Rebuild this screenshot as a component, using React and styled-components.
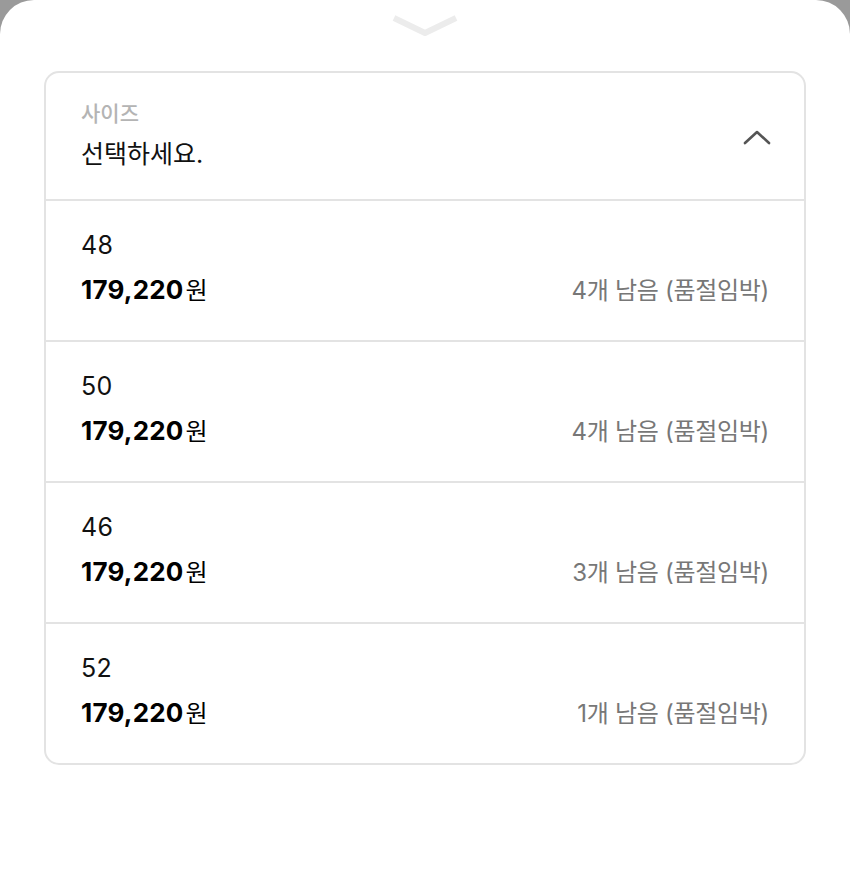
import React from 'react';
import styled, { createGlobalStyle } from 'styled-components';

const GlobalStyle = createGlobalStyle`
  html, body {
    margin: 0;
    padding: 0;
    background: #9a9a9a;
  }
  body {
    font-family: Inter, "Noto Sans CJK KR", sans-serif;
    color: #111;
  }
`;

const Sheet = styled.div`
  background: #fff;
  border-radius: 34px 34px 0 0;
  min-height: 871px;
  box-sizing: border-box;
  padding: 0 44px;
  display: flex;
  flex-direction: column;
`;

const Handle = styled.div`
  height: 71px;
  display: flex;
  justify-content: center;
  padding-top: 13px;
  box-sizing: border-box;
`;

const Card = styled.div`
  border: 2px solid #e3e3e3;
  border-radius: 15px;
  overflow: hidden;
`;

const Header = styled.div`
  height: 126px;
  box-sizing: border-box;
  padding: 26px 35px 0 35px;
  display: flex;
  justify-content: space-between;
  align-items: flex-start;
`;

const Label = styled.div`
  font-size: 21px;
  color: #b4b4b4;
  line-height: 30px;
  font-weight: 500;
`;

const Placeholder = styled.div`
  font-size: 25px;
  color: #111;
  line-height: 34px;
  margin-top: 8px;
`;

const Toggle = styled.div`
  margin-top: 30px;
  margin-right: -2px;
`;

const Option = styled.div`
  height: 141px;
  box-sizing: border-box;
  border-top: 2px solid #e3e3e3;
  padding: 26px 35px 0 35px;
`;

const Size = styled.div`
  font-size: 25px;
  line-height: 36px;
  color: #111;
  letter-spacing: 0.3px;
`;

const PriceRow = styled.div`
  display: flex;
  justify-content: space-between;
  align-items: baseline;
  margin-top: 8px;
`;

const Price = styled.div`
  font-size: 26px;
  font-weight: 700;
  line-height: 36px;
  color: #000;
  letter-spacing: 0.2px;
`;

const Won = styled.span`
  font-size: 24px;
  font-weight: 400;
  margin-left: 2px;
`;

const Stock = styled.div`
  font-size: 24px;
  color: #777;
  letter-spacing: -0.3px;
`;

const options = [
  { size: '48', stock: 4 },
  { size: '50', stock: 4 },
  { size: '46', stock: 3 },
  { size: '52', stock: 1 },
];

export default function App() {
  return (
    <>
      <GlobalStyle />
      <Sheet>
        <Handle>
          <svg width="68" height="24" viewBox="0 0 68 24">
            <path d="M3 5 L34 20 L65 5" fill="none" stroke="#ececec" strokeWidth="6" strokeLinejoin="round" />
          </svg>
        </Handle>
        <Card>
          <Header>
            <div>
              <Label>사이즈</Label>
              <Placeholder>선택하세요.</Placeholder>
            </div>
            <Toggle>
              <svg width="28" height="16" viewBox="0 0 28 16">
                <path d="M2 14 L14 3 L26 14" fill="none" stroke="#555" strokeWidth="2.6" strokeLinecap="round" strokeLinejoin="round" />
              </svg>
            </Toggle>
          </Header>
          {options.map((o) => (
            <Option key={o.size}>
              <Size>{o.size}</Size>
              <PriceRow>
                <Price>179,220<Won>원</Won></Price>
                <Stock>{o.stock}개 남음 (품절임박)</Stock>
              </PriceRow>
            </Option>
          ))}
        </Card>
      </Sheet>
    </>
  );
}
